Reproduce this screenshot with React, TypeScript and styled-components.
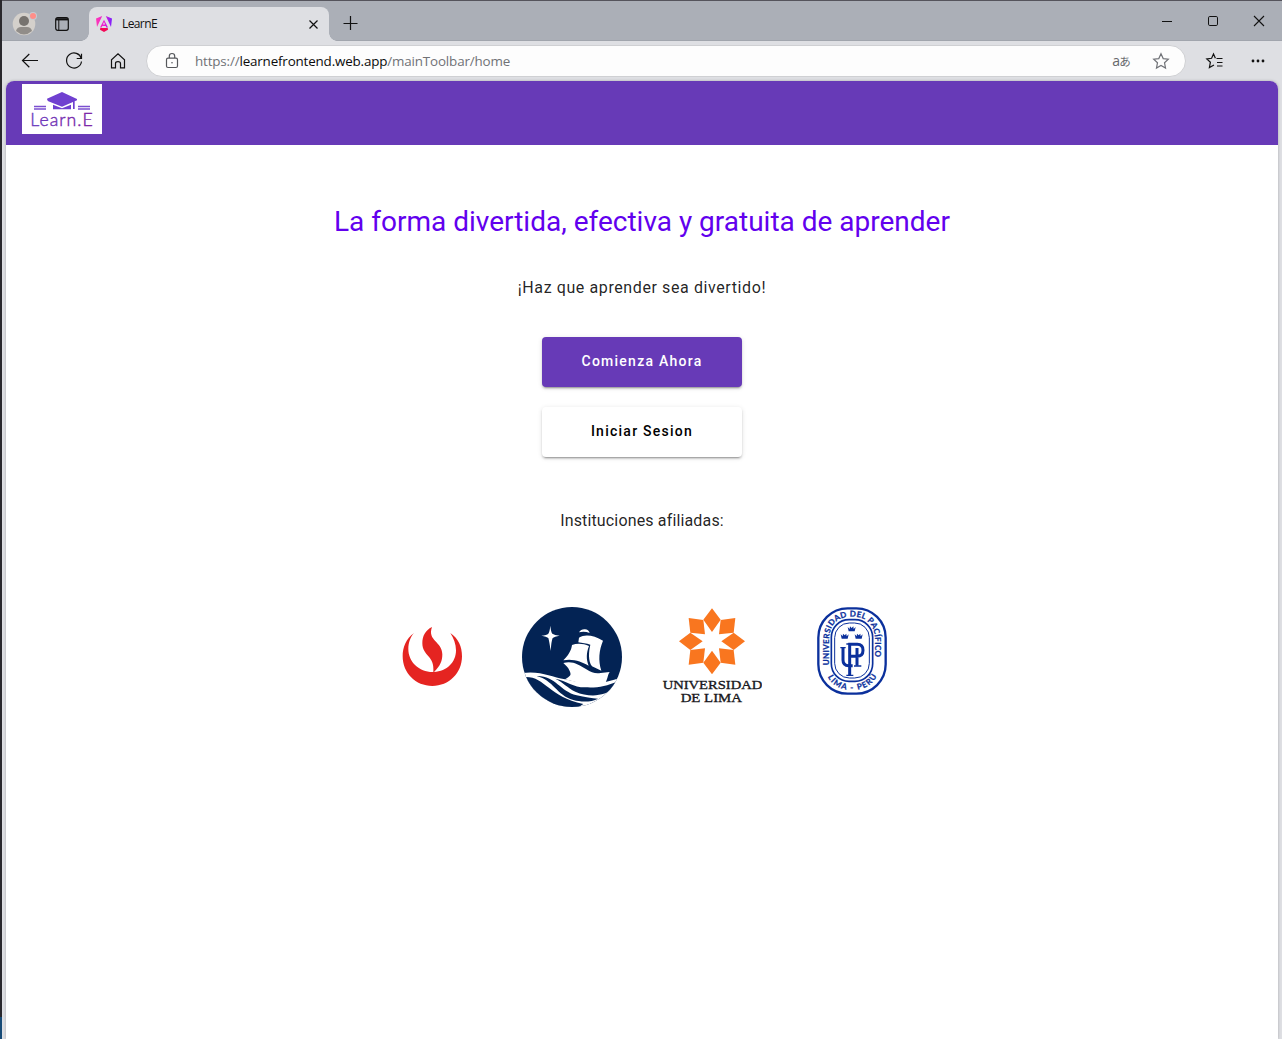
import React from "react";
import styled, { createGlobalStyle } from "styled-components";

const GlobalStyle = createGlobalStyle`
  *, *::before, *::after { box-sizing: border-box; }
  body { margin: 0; background: #dedfe3; overflow: hidden; }
`;

const Desktop = styled.div`
  height: 1039px;
  padding: 1px 0 0 2px;
  background: linear-gradient(#29282d 0 1017px, #164a76 1017px);
  font-family: "Open Sans", "Noto Sans", sans-serif;
`;

const BrowserWindow = styled.div`
  display: flex;
  flex-direction: column;
  height: 1038px;
  background: #dedfe3;
  box-shadow: 0 -1px 0 #55545c;
`;

const TitleBar = styled.header`
  display: flex;
  align-items: flex-start;
  height: 40px;
  background: #abafb7;
  box-shadow: inset 0 -1px 0 #a1a5ad;
`;

const Icon = styled.svg<{ $x?: number; $y?: number; $end?: number; $tone?: string }>`
  display: block;
  flex: none;
  margin: ${(p) => p.$y ?? 0}px ${(p) => p.$end ?? 0}px 0 ${(p) => p.$x ?? 0}px;
  fill: none;
  stroke: ${(p) => p.$tone ?? "#111"};
  stroke-width: 1.2;
  overflow: visible;
`;

const Tab = styled.div`
  position: relative;
  display: flex;
  width: 240px;
  height: 34px;
  margin: 6px 0 0 20px;
  border-radius: 8px 8px 0 0;
  background: #dedfe3;

  &::before,
  &::after {
    content: "";
    position: absolute;
    bottom: 0;
    width: 8px;
    height: 8px;
  }
  &::before {
    left: -8px;
    background: radial-gradient(circle at 0 0, transparent 7.5px, #dedfe3 8px);
  }
  &::after {
    right: -8px;
    background: radial-gradient(circle at 100% 0, transparent 7.5px, #dedfe3 8px);
  }
`;

const TabTitle = styled.span`
  flex: 1;
  margin-left: 10px;
  font-size: 12px;
  line-height: 33px;
  letter-spacing: -0.6px;
  color: #111;
`;

const WindowControls = styled.div`
  display: flex;
  margin-left: auto;
`;

const WindowButton = styled.div`
  display: flex;
  justify-content: center;
  align-items: center;
  width: 46px;
  height: 40px;
`;

const NavBar = styled.nav`
  display: flex;
  align-items: center;
  height: 40px;
  padding-left: 18px;
`;

const NavButton = styled.div`
  display: flex;
  justify-content: center;
  width: 20px;
  margin-right: 24px;
`;

const AddressBar = styled.div`
  display: flex;
  align-items: center;
  width: 1040px;
  height: 32px;
  margin-left: -6px;
  padding: 0 16px 0 18px;
  border: 1px solid #cfd0d3;
  border-radius: 16px;
  background: #fdfdfd;
`;

const Url = styled.span`
  flex: 1;
  margin-left: 16px;
  font-size: 13.4px;
  letter-spacing: -0.16px;
  white-space: nowrap;
  color: #707276;
`;

const Host = styled.span`
  color: #0b0b0b;
`;

const Translate = styled.span`
  margin-right: 23px;
  font: 14px "Open Sans", "Noto Sans CJK JP", sans-serif;
  line-height: 16px;
  letter-spacing: -0.8px;
  color: #65676b;
`;

const Small = styled.span`
  font-size: 11.5px;
`;

const Page = styled.main`
  flex: 1;
  display: flex;
  flex-direction: column;
  align-items: center;
  width: 1272px;
  margin-left: 4px;
  border-radius: 8px 8px 0 0;
  overflow: hidden;
  background: #fff;
  box-shadow: 0 0 3px rgba(0, 0, 0, 0.25);
  font-family: Roboto, sans-serif;
  color: rgba(0, 0, 0, 0.87);
`;

const AppToolbar = styled.div`
  align-self: stretch;
  height: 64px;
  padding: 3px 16px;
  background: #673ab7;
`;

const Brand = styled.svg`
  display: block;
  width: 80px;
  height: 50px;
  background: #fff;
`;

const Headline = styled.h1`
  margin: 57px 0 0;
  font-size: 28px;
  font-weight: 400;
  line-height: 40px;
  color: #6200ee;
`;

const Tagline = styled.p`
  margin: 34px 0 0;
  font-size: 16px;
  line-height: 24px;
  letter-spacing: 0.6px;
`;

const Actions = styled.div`
  display: flex;
  flex-direction: column;
  gap: 20px;
  margin-top: 37px;
`;

const ActionButton = styled.button<{ $primary?: boolean }>`
  width: 200px;
  height: 50px;
  padding: 0 0 2px;
  border: 0;
  border-radius: 4px;
  background: ${(p) => (p.$primary ? "#673ab7" : "#fff")};
  color: ${(p) => (p.$primary ? "#fff" : "#000")};
  font: 500 14px Roboto, sans-serif;
  letter-spacing: 1.25px;
  box-shadow: 0 3px 1px -2px rgba(0, 0, 0, 0.2), 0 2px 2px 0 rgba(0, 0, 0, 0.14),
    0 1px 5px 0 rgba(0, 0, 0, 0.12);
`;

const Affiliates = styled.p`
  margin: 52px 0 0;
  font-size: 16px;
  line-height: 24px;
  letter-spacing: 0.15px;
`;

const LogoRow = styled.div`
  display: flex;
  gap: 40px;
  margin-top: 74px;
`;

const Logo = styled.svg`
  display: block;
  width: 100px;
  height: 100px;
`;

const star = "M8 .8 10.2 5.6 15.3 6.2 11.5 9.7 12.5 15 8 12.4 3.5 15 4.5 9.7 .7 6.2 5.8 5.6Z";

function LearnLogo() {
  return (
    <Brand viewBox="66 252 240 150">
      <defs>
        <linearGradient id="brand" x1="0" x2="1">
          <stop offset="0" stopColor="#6b3fc0" />
          <stop offset="1" stopColor="#7b1fa2" />
        </linearGradient>
      </defs>
      <path fill="#7040d0" d="M186 276 141 296Q141 301 145 304L186 320 219 306V327H224V304L231 301V297Z" />
      <path fill="#7040d0" d="M159 314 186 325 213 314V328H159Z" />
      <path stroke="#7b4fd0" strokeWidth="4.5" d="M102 319.5H138M102 327H138M234 319.5H270M234 327H270" />
      <text x="91" y="377" textLength="187" fontFamily="Lato, sans-serif" fontWeight="300" fontSize="53" fill="url(#brand)" stroke="url(#brand)" strokeWidth="1.3">
        Learn.E
      </text>
    </Brand>
  );
}

function UpcLogo() {
  return (
    <Logo viewBox="-24 21 300 300" fill="#e52421">
      <path d="M72 99C48 116 38 142 38 169 38 219 77 258 127 258 177 258 216 219 216 169 216 140 205 115 181 99 191 114 198 132 198 151 198 187 171 214 132 216 151 198 157 183 157 163 157 124 111 123 126 81 106 91 97 108 97 130 97 169 135 166 130 216 88 217 55 186 55 147 55 129 61 111 72 99Z" />
    </Logo>
  );
}

function PucpLogo() {
  return (
    <Logo viewBox="36 21 300 300">
      <defs>
        <clipPath id="disc">
          <circle cx="186" cy="171" r="150" />
        </clipPath>
      </defs>
      <g clipPath="url(#disc)">
        <rect x="36" y="21" width="300" height="300" fill="#032354" />
        <g fill="#fff">
          <path d="M121 77Q123 97 127 101 133 105 149 107 133 110 128 114 124 123 122 153 118 124 115 114 110 110 94 107 110 105 115 101Q119 95 121 77Z" />
          <path d="M207 97Q213 87 225 88 236 89 239 99 223 93 207 97Z" />
          <path d="M207 113C225 101 252 106 279 122 267 151 264 181 274 212L246 199C234 183 236 155 241 134 229 129 217 130 205 127Z" />
          <path d="M186 135C201 129 220 130 237 138 229 158 228 178 236 197 215 186 190 175 160 181 174 167 184 152 186 135Z" />
          <path d="M160 189C185 181 207 193 229 208 244 218 258 222 272 219L299 216C292 226 294 236 285 250L235 256 165 238C181 228 185 226 179 213 175 202 167 196 160 189Z" />
          <path d="M30 220C90 210 122 231 165 238 225 254 280 254 340 230V330H30Z" />
        </g>
        <g fill="#032354">
          <path d="M46 231C106 230 115 290 220 312L186 335 30 335V231Z" />
          <path d="M80 228C135 226 150 274 200 286 225 292 245 295 264 296 245 306 215 307 190 300 140 286 130 240 80 228Z" />
          <path d="M136 236C170 243 190 262 225 262 260 264 288 260 324 243L312 265C285 289 237 293 196 275 171 263 160 247 136 236Z" />
        </g>
      </g>
    </Logo>
  );
}

function LimaLogo() {
  const diagonal = "M116 54 160 60 165 103 121 98Z";
  return (
    <Logo viewBox="36 21 300 300">
      <g fill="#f9761f">
        <path d="M186 25 212 59 186 96 160 59ZM186 152 212 188 186 223 160 188ZM87 124 121 98 158 124 121 150ZM214 124 251 98 285 124 251 150Z" />
        <path d={diagonal} />
        <path d={diagonal} transform="matrix(-1 0 0 1 372 0)" />
        <path d={diagonal} transform="matrix(1 0 0 -1 0 248)" />
        <path d={diagonal} transform="matrix(-1 0 0 -1 372 248)" />
      </g>
      <g fill="#17171b" stroke="#17171b" strokeWidth="1" fontFamily="Liberation Serif, serif" fontSize="39">
        <text x="38" y="266" textLength="299" lengthAdjust="spacingAndGlyphs">UNIVERSIDAD</text>
        <text x="92" y="307" textLength="184" lengthAdjust="spacingAndGlyphs">DE LIMA</text>
      </g>
    </Logo>
  );
}

function PacificoLogo() {
  const crown = "M-12 -6-6 0-5-8 0-3 5-8 6 0 12-6 9 7H-9Z";
  return (
    <Logo viewBox="6 21 300 300">
      <defs>
        <path id="upper" d="M87 196V125C87 74 112 50 156 50 200 50 225 74 225 125V200" />
        <path id="lower" d="M82 226C101 284 211 288 232 222" />
      </defs>
      <g fill="none" stroke="#0b309c">
        <rect x="55" y="25" width="202" height="256" rx="88" strokeWidth="7" />
        <rect x="94" y="59" width="124" height="185" rx="53" strokeWidth="5" />
        <rect x="104" y="69" width="104" height="165" rx="44" strokeWidth="3" />
      </g>
      <g fill="#0b309c" stroke="#0b309c" strokeWidth=".8" fontFamily="Lato, sans-serif" fontWeight="700" fontSize="24">
        <text>
          <textPath href="#upper" textLength="350">UNIVERSIDAD DEL PACÍFICO</textPath>
        </text>
        <text>
          <textPath href="#lower" startOffset="4" textLength="178">LIMA - PERÚ</textPath>
        </text>
      </g>
      <g fill="#0b309c">
        <path d={crown} transform="translate(155 87)" />
        <path d={crown} transform="translate(134 109)" />
        <path d={crown} transform="translate(176 109)" />
      </g>
      <g fill="none" stroke="#0b309c" strokeWidth="9">
        <path d="M129 143V180Q129 197 146 197H158M149 225V133H172Q189 133 189 151 189 169 171 169H149M171 144V197" />
        <path strokeWidth="4" d="M121 143H137M139 226H160M162 198H184M139 132H155" />
      </g>
    </Logo>
  );
}

export default function App() {
  return (
    <Desktop>
      <GlobalStyle />
      <BrowserWindow>
        <TitleBar>
          <Icon width="24" height="24" $x={10} $y={11}>
            <g stroke="none">
              <circle cx="12" cy="12" r="11.3" fill="#d4d0cb" />
              <circle cx="12" cy="9" r="5" fill="#77736f" />
              <path d="M4 19Q5 15 9 15H15Q19 15 20 19 12 26 4 19Z" fill="#918d89" />
              <circle cx="21" cy="4" r="4" fill="#c6cbd2" />
              <circle cx="21" cy="4" r="3" fill="#ff8e89" />
            </g>
          </Icon>
          <Icon width="14" height="14" $x={19} $y={16}>
            <rect x=".7" y=".7" width="12.6" height="12.6" rx="2" />
            <path d="M1 2.3H13" strokeWidth="2.2" />
            <path d="M3.8 3V13" strokeWidth="1" />
          </Icon>
          <Tab>
            <Icon width="16" height="16" $x={7} $y={9} viewBox="0 0 16 16">
              <defs>
                <linearGradient id="ng" gradientUnits="userSpaceOnUse" x1="0" y1="0" x2="16" y2="0">
                  <stop offset="0" stopColor="#ff3bb6" />
                  <stop offset=".55" stopColor="#e81ad4" />
                  <stop offset="1" stopColor="#7621ff" />
                </linearGradient>
              </defs>
              <g stroke="none">
                <path fill="url(#ng)" fillRule="evenodd" d="M0 2.5 6.2 0 1 11ZM16 2.5 9.8 0 15 11ZM8 3.7 12 11.5H10.3L9.7 10H6.3L5.7 11.5H4ZM8 6 6.9 8.5H9.1Z" />
                <path fill="#f40857" d="M4.3 12H11.7L12 13.7 8 16 4 13.7Z" />
              </g>
            </Icon>
            <TabTitle>LearnE</TabTitle>
            <Icon width="9" height="9" $y={13} $end={11}>
              <path d="M.5.5 8.5 8.5M8.5.5.5 8.5" />
            </Icon>
          </Tab>
          <Icon width="14" height="14" $x={14} $y={15}>
            <path d="M7.5 0V14M.5 7.5H14.5" />
          </Icon>
          <WindowControls>
            <WindowButton>
              <Icon width="10" height="10"><path d="M0 5.5H10" strokeWidth="1" /></Icon>
            </WindowButton>
            <WindowButton>
              <Icon width="10" height="10"><rect x=".5" y=".5" width="9" height="9" rx="1.3" strokeWidth="1" /></Icon>
            </WindowButton>
            <WindowButton>
              <Icon width="10" height="10"><path d="M0 0 10 10M10 0 0 10" strokeWidth="1.1" /></Icon>
            </WindowButton>
          </WindowControls>
        </TitleBar>

        <NavBar>
          <NavButton>
            <Icon width="16" height="16"><path d="M16 7.5H.5M7.3 1 .5 7.5 7.3 14.2" /></Icon>
          </NavButton>
          <NavButton>
            <Icon width="16" height="16"><path d="M15.3 5.5A7.5 7.5 0 1 0 15.5 8.5M15.5.8V5.5H10.7" /></Icon>
          </NavButton>
          <NavButton>
            <Icon width="16" height="16"><path d="M1.5 14.8V6.8L8 .9 14.5 6.8V14.8H10.5V10.5Q10.5 8.6 8 8.6 5.5 8.6 5.5 10.5V14.8Z" /></Icon>
          </NavButton>
          <AddressBar>
            <Icon width="14" height="16" $tone="#55575b">
              <rect x="1.5" y="5.2" width="11" height="9.3" rx="1.5" />
              <path d="M4.3 5V3.2Q4.3.5 7 .5 9.7.5 9.7 3.2V5" />
              <circle cx="7" cy="9.8" r=".8" fill="#55575b" stroke="none" />
            </Icon>
            <Url>https://<Host>learnefrontend.web.app</Host>/mainToolbar/home</Url>
            <Translate>a<Small>あ</Small></Translate>
            <Icon width="16" height="16" $tone="#717378"><path d={star} /></Icon>
          </AddressBar>
          <Icon width="18" height="16" $x={20}>
            <path d="M10.5 5.5H16.5M11 9.5H16.5M11 13H16.5M9.4 5.3 7.5.9 5.6 5.3.8 5.9 4.4 9.2 3.4 14.5 8 12" />
          </Icon>
          <Icon width="14" height="4" $x={27}>
            <g fill="#111" stroke="none">
              <circle cx="2" cy="2" r="1.4" /><circle cx="7" cy="2" r="1.4" /><circle cx="12" cy="2" r="1.4" />
            </g>
          </Icon>
        </NavBar>

        <Page>
          <AppToolbar><LearnLogo /></AppToolbar>
          <Headline>La forma divertida, efectiva y gratuita de aprender</Headline>
          <Tagline>¡Haz que aprender sea divertido!</Tagline>
          <Actions>
            <ActionButton $primary>Comienza Ahora</ActionButton>
            <ActionButton>Iniciar Sesion</ActionButton>
          </Actions>
          <Affiliates>Instituciones afiliadas:</Affiliates>
          <LogoRow>
            <UpcLogo />
            <PucpLogo />
            <LimaLogo />
            <PacificoLogo />
          </LogoRow>
        </Page>
      </BrowserWindow>
    </Desktop>
  );
}
